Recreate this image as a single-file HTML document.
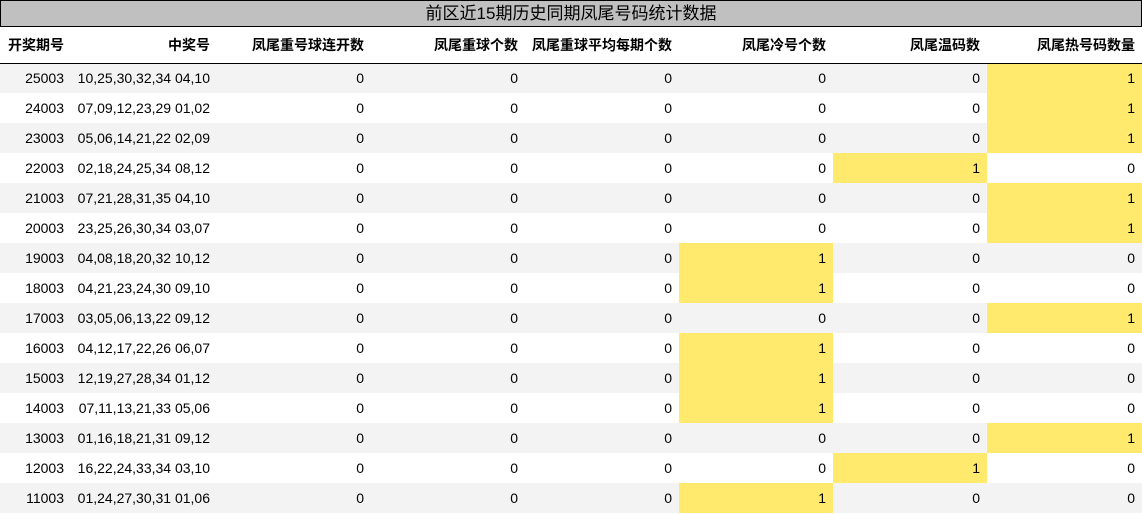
<!DOCTYPE html>
<html><head><meta charset="utf-8"><style>
*{margin:0;padding:0;box-sizing:border-box}
body{width:1142px;height:514px;background:#fff;font-family:"Liberation Sans","Noto Sans CJK SC",sans-serif;font-size:14px;color:#000;overflow:hidden;position:relative}
.title{position:absolute;left:0;top:0;width:1142px;height:27px;background:#c0c0c0;border:1px solid #000;text-align:center;font-size:17px;line-height:25px}
table{position:absolute;left:0;top:27px;border-collapse:collapse;table-layout:fixed;width:1142px}
th,td{text-align:right;padding:0 7px 0 0;white-space:nowrap;overflow:hidden}
th{height:36px;font-weight:bold;border-bottom:1px solid #000;font-size:14px}
td{height:30px}
tr.a td{background:#f3f3f3}
td.y{background:#ffea6e!important}
th:first-child,td:first-child{padding-right:6px}
</style></head><body>
<div class="title">前区近15期历史同期凤尾号码统计数据</div>
<table>
<colgroup><col style="width:70px"><col style="width:147px"><col style="width:154px"><col style="width:154px"><col style="width:154px"><col style="width:154px"><col style="width:154px"><col style="width:155px"></colgroup>
<tr><th>开奖期号</th><th>中奖号</th><th>凤尾重号球连开数</th><th>凤尾重球个数</th><th>凤尾重球平均每期个数</th><th>凤尾冷号个数</th><th>凤尾温码数</th><th>凤尾热号码数量</th></tr>
<tr class="a"><td>25003</td><td>10,25,30,32,34 04,10</td><td>0</td><td>0</td><td>0</td><td>0</td><td>0</td><td class="y">1</td></tr>
<tr><td>24003</td><td>07,09,12,23,29 01,02</td><td>0</td><td>0</td><td>0</td><td>0</td><td>0</td><td class="y">1</td></tr>
<tr class="a"><td>23003</td><td>05,06,14,21,22 02,09</td><td>0</td><td>0</td><td>0</td><td>0</td><td>0</td><td class="y">1</td></tr>
<tr><td>22003</td><td>02,18,24,25,34 08,12</td><td>0</td><td>0</td><td>0</td><td>0</td><td class="y">1</td><td>0</td></tr>
<tr class="a"><td>21003</td><td>07,21,28,31,35 04,10</td><td>0</td><td>0</td><td>0</td><td>0</td><td>0</td><td class="y">1</td></tr>
<tr><td>20003</td><td>23,25,26,30,34 03,07</td><td>0</td><td>0</td><td>0</td><td>0</td><td>0</td><td class="y">1</td></tr>
<tr class="a"><td>19003</td><td>04,08,18,20,32 10,12</td><td>0</td><td>0</td><td>0</td><td class="y">1</td><td>0</td><td>0</td></tr>
<tr><td>18003</td><td>04,21,23,24,30 09,10</td><td>0</td><td>0</td><td>0</td><td class="y">1</td><td>0</td><td>0</td></tr>
<tr class="a"><td>17003</td><td>03,05,06,13,22 09,12</td><td>0</td><td>0</td><td>0</td><td>0</td><td>0</td><td class="y">1</td></tr>
<tr><td>16003</td><td>04,12,17,22,26 06,07</td><td>0</td><td>0</td><td>0</td><td class="y">1</td><td>0</td><td>0</td></tr>
<tr class="a"><td>15003</td><td>12,19,27,28,34 01,12</td><td>0</td><td>0</td><td>0</td><td class="y">1</td><td>0</td><td>0</td></tr>
<tr><td>14003</td><td>07,11,13,21,33 05,06</td><td>0</td><td>0</td><td>0</td><td class="y">1</td><td>0</td><td>0</td></tr>
<tr class="a"><td>13003</td><td>01,16,18,21,31 09,12</td><td>0</td><td>0</td><td>0</td><td>0</td><td>0</td><td class="y">1</td></tr>
<tr><td>12003</td><td>16,22,24,33,34 03,10</td><td>0</td><td>0</td><td>0</td><td>0</td><td class="y">1</td><td>0</td></tr>
<tr class="a"><td>11003</td><td>01,24,27,30,31 01,06</td><td>0</td><td>0</td><td>0</td><td class="y">1</td><td>0</td><td>0</td></tr>
</table>
</body></html>
